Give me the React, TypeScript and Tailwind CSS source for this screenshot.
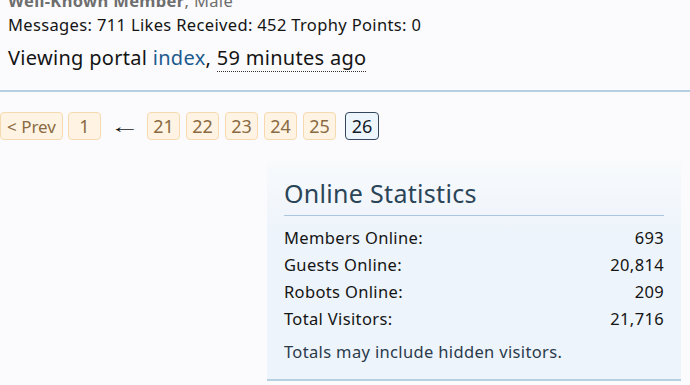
const pages = ['21', '22', '23', '24', '25'];

const stats = [
  { label: 'Members Online:', value: '693' },
  { label: 'Guests Online:', value: '20,814' },
  { label: 'Robots Online:', value: '209' },
  { label: 'Total Visitors:', value: '21,716' },
];

function PageLink({ children, wide }: { children: React.ReactNode; wide?: boolean }) {
  return (
    <a
      className={`flex h-[28px] items-center justify-center rounded-[4px] border border-[#f6d9ae] bg-[#fff4e3] text-[#8a6a42] ${
        wide ? 'w-[63px] text-[17px]' : 'w-[33px] text-[18px]'
      }`}
    >
      {children}
    </a>
  );
}

export default function App() {
  return (
    <div
      className="h-[385px] w-[690px] overflow-hidden bg-[#fbfbfd] text-[16.5px] tracking-[0.35px] text-[#141414]"
      style={{ fontFamily: '"Noto Sans", sans-serif' }}
    >
      <div className="px-2">
        <div className="mt-[-9px] whitespace-nowrap leading-[20px] text-[#6e6e6e]">
          <b>Well-Known Member</b>, Male
        </div>
        <div className="mt-[4px] whitespace-nowrap leading-[20px]">
          Messages: 711 Likes Received: 452 Trophy Points: 0
        </div>
        <div className="mt-[10px] whitespace-nowrap text-[20px] leading-[26px] tracking-[0.3px]">
          Viewing portal <a className="text-[#1c5a8e]">index</a>,{' '}
          <span className="border-b border-dotted border-[#333]">59 minutes ago</span>
        </div>
      </div>

      <div className="mt-[19px] h-[2px] bg-[#b5cfe3]" />

      <div className="mt-[20px] flex items-center leading-none tracking-normal">
        <PageLink wide>&lt; Prev</PageLink>
        <div className="ml-[5px]">
          <PageLink>1</PageLink>
        </div>
        <span
          className="ml-[14px] mr-[14px] inline-block w-[18px] scale-x-[1.6] text-center text-[19px] text-[#141414]"
          style={{ fontFamily: '"Liberation Sans", sans-serif' }}
        >
          ←
        </span>
        <div className="flex gap-[6px]">
          {pages.map((p) => (
            <PageLink key={p}>{p}</PageLink>
          ))}
        </div>
        <a className="ml-[9px] flex h-[28px] w-[34px] items-center justify-center rounded-[4px] border border-[#32475b] bg-[#eef6fd] text-[18px] text-[#141c28]">
          26
        </a>
      </div>

      <div className="mt-[21px] flex">
        <div className="ml-[267px] w-[414px] border-b-2 border-[#b5cfe3] bg-[linear-gradient(to_bottom,#f8fafc,#eef4fb_70px)] px-[17px] pt-[17px] pb-[14px]">
          <h3 className="border-b border-[#a9c7de] pb-[7px] text-[25px] leading-[30px] tracking-[0.3px] text-[#2b4558]">
            Online Statistics
          </h3>
          <dl className="mt-[8px]">
            {stats.map((s) => (
              <div key={s.label} className="flex justify-between leading-[27px]">
                <dt>{s.label}</dt>
                <dd>{s.value}</dd>
              </div>
            ))}
          </dl>
          <p className="mt-[6px] leading-[27px] text-[#2a3b4c]">Totals may include hidden visitors.</p>
        </div>
      </div>
    </div>
  );
}
